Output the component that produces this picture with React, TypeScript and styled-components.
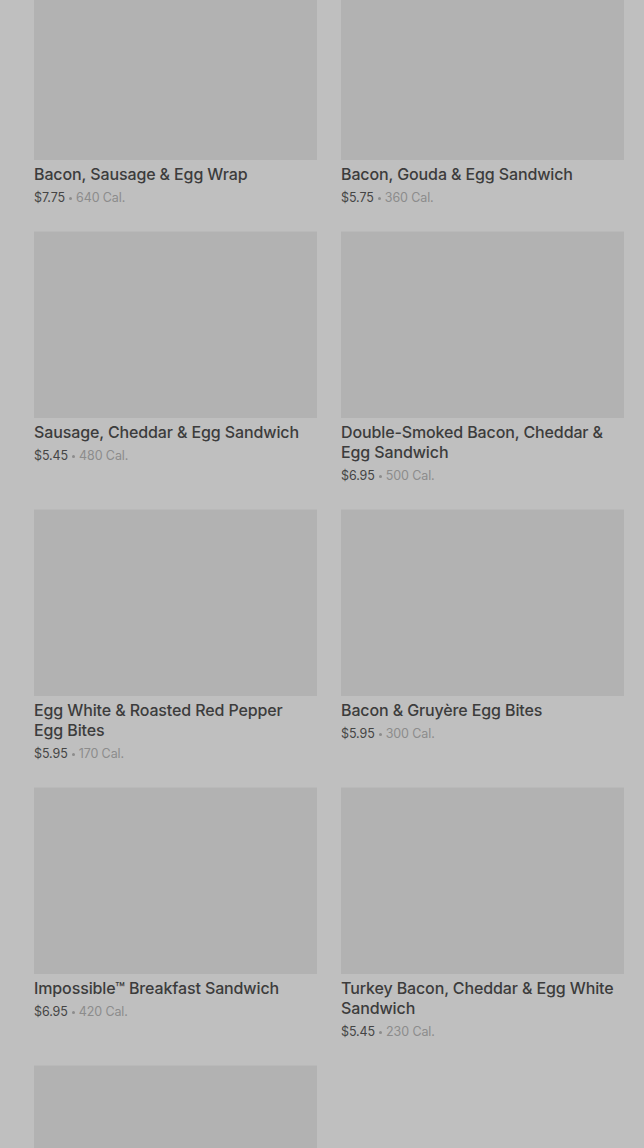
import React from "react";
import styled, { createGlobalStyle } from "styled-components";

const Global = createGlobalStyle`
  html, body { margin: 0; padding: 0; background: #bfbfbf; }
  body { font-family: Inter, "Noto Sans", "Liberation Sans", sans-serif; overflow: hidden; }
`;

const Page = styled.div`
  width: 644px;
  height: 1148px;
  overflow: hidden;
  background: #bfbfbf;
`;

const Grid = styled.div`
  margin-top: -27px;
  padding: 0 20px 0 34px;
  display: grid;
  grid-template-columns: 283px 283px;
  column-gap: 24px;
  row-gap: 23px;
  align-items: start;
`;

const Card = styled.div`
  display: flex;
  flex-direction: column;
`;

const Thumb = styled.div`
  height: 187px;
  background: #b2b2b2;
  border-top: 1px solid #b9b9b9;
  box-sizing: border-box;
  margin-bottom: 4px;
`;

const Title = styled.div`
  font-size: 16px;
  line-height: 20px;
  font-weight: 500;
  color: #3c3c3c;
  letter-spacing: -0.12px;
  padding-right: 8px;
`;

const Meta = styled.div`
  display: flex;
  align-items: center;
  font-size: 12.5px;
  line-height: 20px;
  margin-top: 4px;
  color: #454545;
  letter-spacing: -0.1px;
`;

const Dot = styled.span`
  display: inline-block;
  width: 3px;
  height: 3px;
  border-radius: 50%;
  background: #8c8c8c;
  margin: 0 4px;
`;

const Cal = styled.span`
  color: #8c8c8c;
`;

const items = [
  { t: "Bacon, Sausage & Egg Wrap", p: "$7.75", c: "640 Cal." },
  { t: "Bacon, Gouda & Egg Sandwich", p: "$5.75", c: "360 Cal." },
  { t: "Sausage, Cheddar & Egg Sandwich", p: "$5.45", c: "480 Cal." },
  { t: "Double-Smoked Bacon, Cheddar & Egg Sandwich", p: "$6.95", c: "500 Cal." },
  { t: "Egg White & Roasted Red Pepper Egg Bites", p: "$5.95", c: "170 Cal." },
  { t: "Bacon & Gruyère Egg Bites", p: "$5.95", c: "300 Cal." },
  { t: "Impossible™ Breakfast Sandwich", p: "$6.95", c: "420 Cal." },
  { t: "Turkey Bacon, Cheddar & Egg White Sandwich", p: "$5.45", c: "230 Cal." },
];

export default function App() {
  return (
    <Page>
      <Global />
      <Grid>
        {items.map((it) => (
          <Card key={it.t}>
            <Thumb />
            <Title>{it.t}</Title>
            <Meta>
              <span>{it.p}</span>
              <Dot />
              <Cal>{it.c}</Cal>
            </Meta>
          </Card>
        ))}
        <Card>
          <Thumb />
        </Card>
      </Grid>
    </Page>
  );
}
